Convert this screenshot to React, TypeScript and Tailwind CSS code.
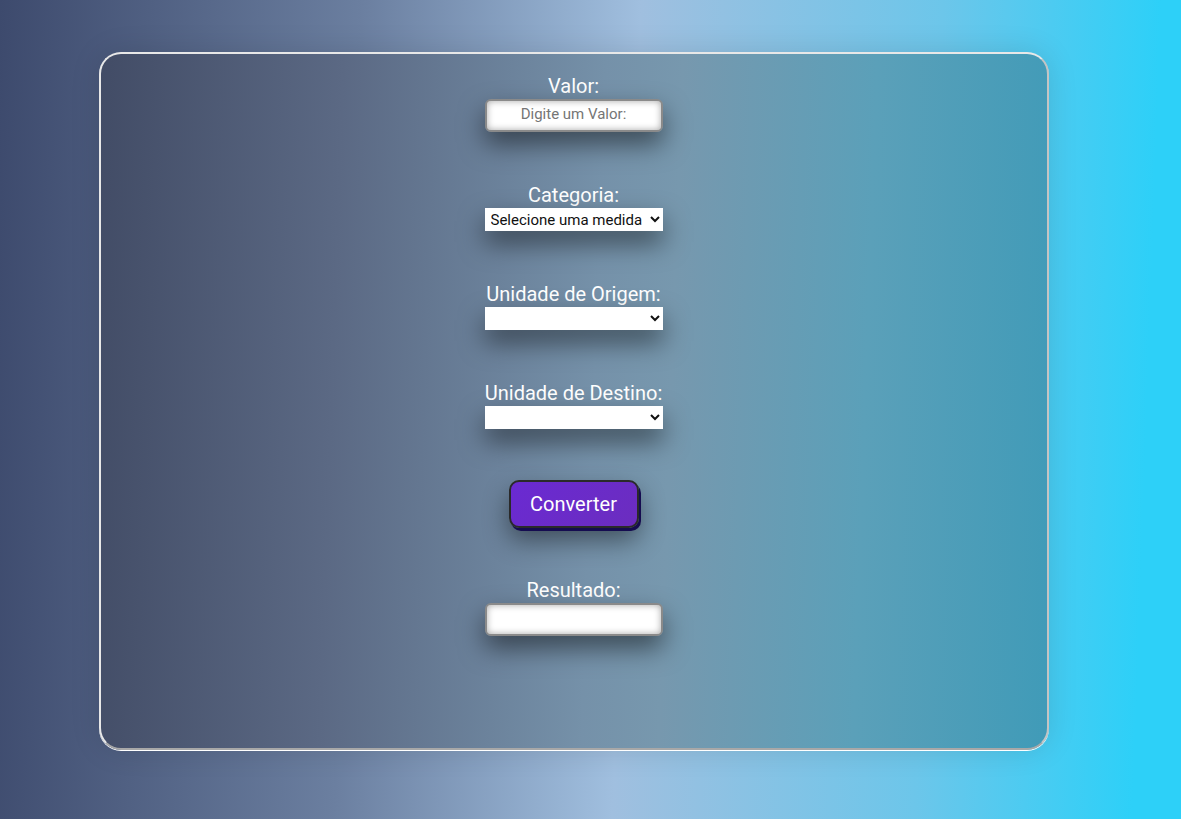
import React from 'react'

const fieldShadow = 'shadow-[0_12px_26px_rgba(0,0,0,0.5)]'

function Label({ children }: { children: React.ReactNode }) {
  return <label className="block text-center text-[20px] leading-[24px] text-white">{children}</label>
}

function TextBox({ placeholder }: { placeholder?: string }) {
  return (
    <div className={`rounded-[6px] ${fieldShadow}`}>
      <input
        type="text"
        placeholder={placeholder}
        className="block h-[33px] w-[178px] rounded-[6px] border-2 border-[#8a8a8a] bg-white pb-[3px] text-center text-[15px] text-[#222] shadow-[inset_0_0_7px_rgba(0,0,0,0.35)] outline-none placeholder:text-[#757575]"
      />
    </div>
  )
}

function Select({ options }: { options: string[] }) {
  return (
    <select
      className={`block h-[23px] w-[178px] bg-white pl-[2px] text-[15px] text-[#111] ${fieldShadow}`}
      defaultValue={options[0]}
    >
      {options.map((o) => (
        <option key={o}>{o}</option>
      ))}
    </select>
  )
}

export default function App() {
  return (
    <div className="min-h-[819px] w-full bg-[linear-gradient(92deg,#3d4a6d_0%,#6b7fa0_30%,#a0bfdf_53%,#6cc6ea_78%,#2dd0f8_96%)] pt-[52px] font-['Roboto','Liberation_Sans',sans-serif]">
      <div className="mx-auto h-[698px] w-[950px] -translate-x-[17px] rounded-[22px] border-2 border-[#e8e8e8] border-r-[#c4c4c4] border-b-[#a8a8a8] bg-[linear-gradient(92deg,#424c66_0%,#5b6984_25%,#7591a9_52%,#7798ae_60%,#5ba0b9_80%,#409bb8_100%)] shadow-[0_1px_0_#ffffff,0_0_30px_rgba(0,0,0,0.12)]">
        <div className="flex flex-col items-center gap-[51px] pt-[20px]">
          <div className="flex flex-col items-center gap-[1px]">
            <Label>Valor:</Label>
            <TextBox placeholder="Digite um Valor:" />
          </div>
          <div className="flex flex-col items-center gap-[1px]">
            <Label>Categoria:</Label>
            <Select options={['Selecione uma medida', 'Comprimento', 'Massa', 'Temperatura']} />
          </div>
          <div className="flex flex-col items-center gap-[1px]">
            <Label>Unidade de Origem:</Label>
            <Select options={['']} />
          </div>
          <div className="flex flex-col items-center gap-[1px]">
            <Label>Unidade de Destino:</Label>
            <Select options={['']} />
          </div>
          <button
            type="button"
            className="h-[48px] w-[130px] rounded-[10px] border-2 border-[#2a2a2a] bg-[linear-gradient(135deg,#6a2ad2,#6b2dbf)] text-[20px] text-white shadow-[2px_3px_0_#150c50,0_12px_26px_rgba(0,0,0,0.45)]"
          >
            Converter
          </button>
          <div className="-mt-[1px] flex flex-col items-center gap-[1px]">
            <Label>Resultado:</Label>
            <TextBox />
          </div>
        </div>
      </div>
    </div>
  )
}
